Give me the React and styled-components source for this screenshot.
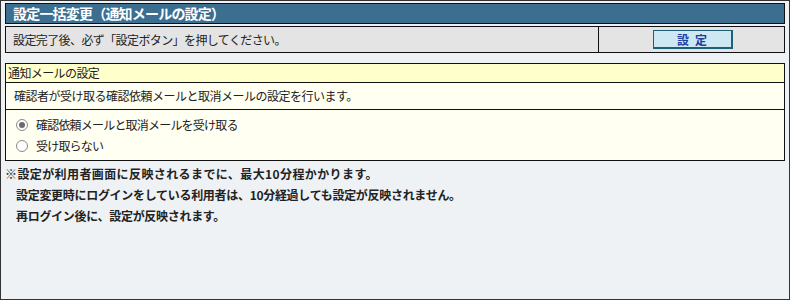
import React from "react";
import styled, { createGlobalStyle } from "styled-components";

const Global = createGlobalStyle`
  html, body { margin: 0; padding: 0; }
  body {
    font-family: "Noto Sans CJK JP", "Liberation Sans", sans-serif;
    font-size: 12px;
    color: #222;
  }
`;

const Frame = styled.div`
  box-sizing: border-box;
  width: 790px;
  height: 300px;
  border: 1px solid #333;
  background: #eef2f5;
  padding: 2px 4px 0 4px;
  display: flex;
  flex-direction: column;
`;

const TitleBar = styled.div`
  box-sizing: border-box;
  height: 21px;
  border: 1px solid #111;
  background: #3b6e8f;
  color: #fff;
  font-weight: bold;
  font-size: 14px;
  line-height: 19px;
  padding-left: 7px;
  letter-spacing: -0.8px;
`;

const InfoRow = styled.div`
  box-sizing: border-box;
  margin-top: 2px;
  height: 27px;
  border: 1px solid #111;
  background: #e4e4e4;
  display: grid;
  grid-template-columns: 593px 1fr;
`;

const InfoText = styled.div`
  padding-left: 7px;
  line-height: 25px;
  border-right: 1px solid #111;
  letter-spacing: -0.6px;
`;

const ButtonCell = styled.div`
  display: flex;
  align-items: center;
  justify-content: center;
`;

const SetButton = styled.button`
  box-sizing: border-box;
  width: 80px;
  height: 19px;
  margin-left: 2px;
  border: 1px solid #1f5f77;
  border-right-width: 2px;
  border-bottom-width: 2px;
  background: #cde8f2;
  color: #1b3fa0;
  font-family: "Noto Sans CJK JP", sans-serif;
  font-weight: bold;
  font-size: 12px;
  line-height: 15px;
  letter-spacing: 6px;
  padding: 0 0 0 6px;
`;

const Section = styled.div`
  box-sizing: border-box;
  margin-top: 10px;
  border: 1px solid #111;
  background: #fffff2;
`;

const SectionHead = styled.div`
  height: 18px;
  line-height: 18px;
  background: #ffffcc;
  border-bottom: 1px solid #111;
  padding-left: 2px;
  letter-spacing: -0.6px;
`;

const SectionDesc = styled.div`
  height: 26px;
  line-height: 26px;
  border-bottom: 1px solid #111;
  padding-left: 8px;
  letter-spacing: -0.5px;
`;

const Options = styled.div`
  height: 50px;
  padding: 4px 0 0 8px;
  box-sizing: border-box;
`;

const Option = styled.label`
  display: flex;
  align-items: center;
  height: 21px;
  letter-spacing: -0.8px;
`;

const Radio = styled.span`
  box-sizing: border-box;
  width: 12px;
  height: 12px;
  border-radius: 50%;
  border: 1px solid #8a8a8a;
  background: #fff;
  margin: 0 8px 0 2px;
  display: flex;
  align-items: center;
  justify-content: center;
  &::after {
    content: "";
    width: 6px;
    height: 6px;
    border-radius: 50%;
    background: ${(p) => (p.$checked ? "#6b6b6b" : "transparent")};
  }
`;

const Notes = styled.div`
  margin-top: 2px;
  font-weight: bold;
  font-size: 12px;
  line-height: 21px;
  color: #222;
`;

const NoteLine = styled.div`
  padding-left: ${(p) => (p.$indent ? "11px" : "0")};
  letter-spacing: ${(p) => (p.$indent ? "-0.3px" : "0.4px")};
`;

export default function App() {
  return (
    <>
      <Global />
      <Frame>
        <TitleBar>設定一括変更（通知メールの設定）</TitleBar>
        <InfoRow>
          <InfoText>設定完了後、必ず「設定ボタン」を押してください。</InfoText>
          <ButtonCell>
            <SetButton type="button">設定</SetButton>
          </ButtonCell>
        </InfoRow>
        <Section>
          <SectionHead>通知メールの設定</SectionHead>
          <SectionDesc>確認者が受け取る確認依頼メールと取消メールの設定を行います。</SectionDesc>
          <Options>
            <Option>
              <Radio $checked />
              確認依頼メールと取消メールを受け取る
            </Option>
            <Option>
              <Radio />
              受け取らない
            </Option>
          </Options>
        </Section>
        <Notes>
          <NoteLine>※設定が利用者画面に反映されるまでに、最大10分程かかります。</NoteLine>
          <NoteLine $indent>設定変更時にログインをしている利用者は、10分経過しても設定が反映されません。</NoteLine>
          <NoteLine $indent>再ログイン後に、設定が反映されます。</NoteLine>
        </Notes>
      </Frame>
    </>
  );
}
